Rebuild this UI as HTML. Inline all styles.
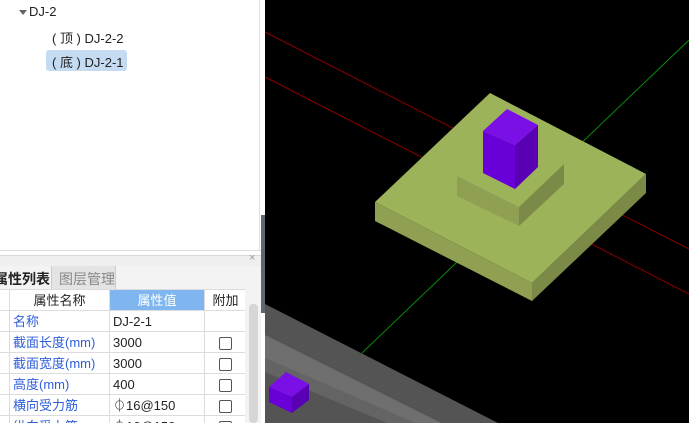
<!DOCTYPE html>
<html><head><meta charset="utf-8"><style>
*{margin:0;padding:0;box-sizing:border-box}
html,body{width:689px;height:423px;overflow:hidden}
body{background:#fff;position:relative;font-family:"Liberation Sans","Noto Sans CJK SC",sans-serif;font-size:13px;color:#222}
.a{position:absolute}
.t{position:absolute;white-space:nowrap;font-size:13px}
table{border-collapse:collapse;position:absolute;left:-1px;top:289px;table-layout:fixed}
td{border:1px solid #dcdcdc;height:21px;line-height:19px;padding:0 3px;font-size:13px;white-space:nowrap;vertical-align:middle;overflow:hidden}
.b{color:#2f5fd8}
.cb{display:inline-block;width:13px;height:13px;border:1px solid #555;border-radius:2px;vertical-align:middle}
</style></head><body>
<div class="a" style="left:19px;top:10px;width:0;height:0;border-left:4px solid transparent;border-right:4px solid transparent;border-top:5px solid #666"></div>
<div class="t" style="left:29px;top:4px">DJ-2</div>
<div class="t" style="left:52px;top:28px">( 顶 ) DJ-2-2</div>
<div class="a" style="left:46px;top:50px;width:81px;height:21px;background:#c4dbf2;border-radius:3px"></div>
<div class="t" style="left:52px;top:52px">( 底 ) DJ-2-1</div>
<div class="a" style="left:259px;top:0;width:1px;height:250px;background:#e0e0e0"></div>
<div class="a" style="left:0;top:250px;width:261px;height:1px;background:#ddd"></div>
<div class="a" style="left:0;top:255px;width:261px;height:11px;background:#efefef;border-top:1px solid #d8d8d8"></div>
<div class="t" style="left:249px;top:252px;color:#999;font-size:11px">×</div>
<div class="a" style="left:0;top:266px;width:261px;height:23px;background:#f3f3f3"></div>
<div class="t" style="left:-6px;top:269px;font-weight:bold;font-size:14px">属性列表</div>
<div class="a" style="left:51px;top:266px;width:65px;height:23px;background:#e4e4e4;border-left:1px solid #ccc;border-right:1px solid #ccc"></div>
<div class="t" style="left:59px;top:269px;color:#888;font-size:14px">图层管理</div>
<table>
<tr><td style="width:10px"></td><td style="width:100px;text-align:center">属性名称</td><td style="width:95px;text-align:center;background:#7fb6ef;color:#fff">属性值</td><td style="width:42px;text-align:center">附加</td></tr>
<tr><td></td><td class="b">名称</td><td>DJ-2-1</td><td></td></tr>
<tr><td></td><td class="b">截面长度(mm)</td><td>3000</td><td style="text-align:center"><span class="cb"></span></td></tr>
<tr><td></td><td class="b">截面宽度(mm)</td><td>3000</td><td style="text-align:center"><span class="cb"></span></td></tr>
<tr><td></td><td class="b">高度(mm)</td><td>400</td><td style="text-align:center"><span class="cb"></span></td></tr>
<tr><td></td><td class="b">横向受力筋</td><td>⏀16@150</td><td style="text-align:center"><span class="cb"></span></td></tr>
<tr><td></td><td class="b">纵向受力筋</td><td>⏀16@150</td><td style="text-align:center"><span class="cb"></span></td></tr>
</table>
<div class="a" style="left:245px;top:289px;width:16px;height:134px;background:#f3f3f3"></div>
<div class="a" style="left:249px;top:304px;width:9px;height:119px;background:#d6d6d6;border-radius:4px"></div>
<svg class="a" style="left:0;top:0" width="689" height="423">
<rect x="265" y="0" width="424" height="423" fill="#000"/>
<rect x="261" y="215" width="4" height="98" fill="#5f6872"/>
<line x1="265" y1="32" x2="689" y2="249" stroke="#8a0000" stroke-width="1"/>
<line x1="265" y1="77" x2="689" y2="294" stroke="#8a0000" stroke-width="1"/>
<line x1="689" y1="40" x2="362" y2="353" stroke="#0a8a0a" stroke-width="1"/>
<polygon points="490,93 646,174 532,283 375,202" fill="#9db35a"/>
<polygon points="375,202 532,283 532,301 375,221" fill="#8fa052"/>
<polygon points="532,283 646,174 646,193 532,301" fill="#7b8b47"/>
<polygon points="457,176 519,207 519,226 457,196" fill="#8fa052"/>
<polygon points="519,207 564,164 564,184 519,226" fill="#7b8b47"/>
<polygon points="483,131 507,109 538,125 515,145" fill="#7a0fe6"/>
<polygon points="483,131 515,145 515,189 483,173" fill="#6a00d8"/>
<polygon points="515,145 538,125 538,167 515,189" fill="#5a00b4"/>
<polygon points="265,304 498,423 265,423" fill="#545454"/>
<polygon points="265,335 441,423 415,423 265,358" fill="#6f6f6f"/>
<polygon points="265,358 415,423 387,423 265,372" fill="#646464"/>
<polygon points="269,387 286,372 309,384 292,397" fill="#7a0fe6"/>
<polygon points="269,387 292,397 292,413 269,402" fill="#6a00d8"/>
<polygon points="292,397 309,384 309,400 292,413" fill="#5a00b4"/>
</svg>
</body></html>
